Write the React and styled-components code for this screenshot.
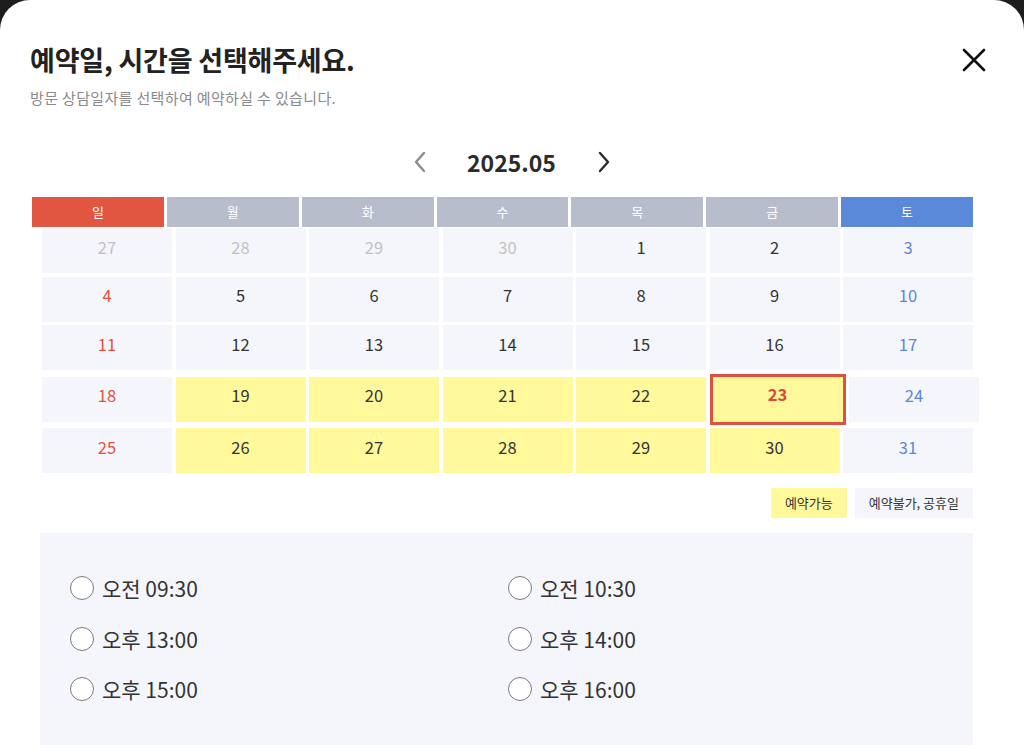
import React, { useState } from 'react';
import styled, { createGlobalStyle, css } from 'styled-components';

const GlobalStyle = createGlobalStyle`
  html, body {
    margin: 0;
    padding: 0;
    background: #1d1d1d;
  }
  body {
    font-family: 'Noto Sans CJK KR', 'Noto Sans', sans-serif;
    color: #333;
  }
`;

const Modal = styled.div`
  background: #fff;
  border-radius: 30px 30px 0 0;
  min-height: 755px;
  padding: 42px 38px 0 30px;
  box-sizing: border-box;
  overflow: hidden;
`;

const TitleRow = styled.div`
  display: flex;
  justify-content: space-between;
  align-items: center;
`;

const Title = styled.h2`
  margin: 0;
  font-size: 27px;
  line-height: 35px;
  font-weight: 700;
  color: #222;
  letter-spacing: -0.2px;
`;

const CloseButton = styled.button`
  border: 0;
  background: none;
  padding: 0;
  width: 24px;
  height: 24px;
  display: flex;
  align-items: center;
  justify-content: center;
  cursor: pointer;
`;

const Subtitle = styled.p`
  margin: 11px 0 0;
  font-size: 15px;
  line-height: 20px;
  color: #8a8a8a;
  letter-spacing: 0.35px;
`;

const MonthNav = styled.div`
  margin: 39px 0 0 10px;
  height: 30px;
  display: flex;
  align-items: center;
  justify-content: center;
  gap: 23px;
  width: 943px;
`;

const NavButton = styled.button`
  border: 0;
  background: none;
  padding: 0;
  width: 20px;
  height: 24px;
  display: flex;
  align-items: center;
  justify-content: center;
  cursor: pointer;
`;

const MonthLabel = styled.span`
  font-size: 23px;
  font-weight: 700;
  color: #2b2b2b;
  width: 116px;
  text-align: center;
`;

const WeekHeader = styled.div`
  margin: 20px 0 0 2px;
  width: 941px;
  display: grid;
  grid-template-columns: repeat(7, 1fr);
  gap: 3px;
`;

const headColors = ['#e05641', '#b8bdcc', '#b8bdcc', '#b8bdcc', '#b8bdcc', '#b8bdcc', '#5b89d9'];

const HeadCell = styled.div`
  height: 30px;
  line-height: 30px;
  text-align: center;
  font-size: 13px;
  color: #fff;
  background: ${({ $idx }) => headColors[$idx]};
`;

const Weeks = styled.div`
  margin: 1px 0 0 12px;
  display: flex;
  flex-direction: column;
  gap: 3.5px;
`;

const WeekRow = styled.div`
  display: flex;
  align-items: center;
  gap: 3.5px;
`;

const dayColor = ({ $type, $idx }) => {
  if ($type === 'prev') return '#c2c2c2';
  if ($type === 'selected') return '#e2483a';
  if ($idx === 0) return '#e2503d';
  if ($idx === 6) return '#5a87d6';
  return '#333';
};

const DayCell = styled.div`
  width: 130px;
  height: 45px;
  box-sizing: border-box;
  padding-bottom: 8px;
  display: flex;
  align-items: center;
  justify-content: center;
  font-size: 16.5px;
  color: ${dayColor};
  background: ${({ $type }) => ($type === 'avail' || $type === 'selected' ? '#fff99b' : '#f5f6fb')};
  ${({ $type }) =>
    $type === 'selected' &&
    css`
      box-sizing: content-box;
      height: 45px;
      padding-bottom: 0;
      border: 3px solid #e0503e;
      font-weight: 700;
      align-items: flex-start;
    `}
`;

const SelectedNum = styled.span`
  margin-top: 5px;
`;

const Legend = styled.div`
  margin: 15px 0 0;
  width: 943px;
  display: flex;
  justify-content: flex-end;
  gap: 8px;
`;

const LegendItem = styled.div`
  height: 30px;
  line-height: 30px;
  padding: 0 14px;
  font-size: 13px;
  color: #333;
  background: ${({ $avail }) => ($avail ? '#fff99b' : '#f5f6fb')};
`;

const TimePanel = styled.div`
  margin: 15px 0 0 10px;
  width: 933px;
  height: 212px;
  box-sizing: border-box;
  background: #f5f6fb;
  padding: 40px 30px 0;
  display: grid;
  grid-template-columns: 438px 1fr;
  row-gap: 20.5px;
  align-content: start;
`;

const TimeOption = styled.label`
  display: flex;
  align-items: center;
  gap: 8px;
  height: 30px;
  font-size: 21px;
  color: #333;
  cursor: pointer;
`;

const RadioCircle = styled.span`
  width: 22px;
  height: 22px;
  border-radius: 50%;
  border: 1.5px solid #7a7a7a;
  background: #fff;
  display: inline-flex;
  align-items: center;
  justify-content: center;
  flex-shrink: 0;
  &::after {
    content: '';
    width: 11px;
    height: 11px;
    border-radius: 50%;
    background: ${({ $checked }) => ($checked ? '#333' : 'transparent')};
  }
`;

const HiddenRadio = styled.input`
  display: none;
`;

const weeks = [
  [[27, 'prev'], [28, 'prev'], [29, 'prev'], [30, 'prev'], [1, 'normal'], [2, 'normal'], [3, 'normal']],
  [[4, 'normal'], [5, 'normal'], [6, 'normal'], [7, 'normal'], [8, 'normal'], [9, 'normal'], [10, 'normal']],
  [[11, 'normal'], [12, 'normal'], [13, 'normal'], [14, 'normal'], [15, 'normal'], [16, 'normal'], [17, 'normal']],
  [[18, 'normal'], [19, 'avail'], [20, 'avail'], [21, 'avail'], [22, 'avail'], [23, 'selected'], [24, 'normal']],
  [[25, 'normal'], [26, 'avail'], [27, 'avail'], [28, 'avail'], [29, 'avail'], [30, 'avail'], [31, 'normal']],
];

const days = ['일', '월', '화', '수', '목', '금', '토'];

const times = ['오전 09:30', '오전 10:30', '오후 13:00', '오후 14:00', '오후 15:00', '오후 16:00'];

function Chevron({ dir, color }) {
  const points = dir === 'left' ? '13,3 5,12 13,21' : '7,3 15,12 7,21';
  return (
    <svg width="20" height="24" viewBox="0 0 20 24" fill="none">
      <polyline points={points} stroke={color} strokeWidth="2.4" strokeLinecap="round" strokeLinejoin="round" />
    </svg>
  );
}

export default function App() {
  const [time, setTime] = useState(null);

  return (
    <>
      <GlobalStyle />
      <Modal>
        <TitleRow>
          <Title>예약일, 시간을 선택해주세요.</Title>
          <CloseButton aria-label="닫기">
            <svg width="24" height="24" viewBox="0 0 24 24" fill="none">
              <path d="M2 2 L22 22 M22 2 L2 22" stroke="#111" strokeWidth="2.6" strokeLinecap="round" />
            </svg>
          </CloseButton>
        </TitleRow>
        <Subtitle>방문 상담일자를 선택하여 예약하실 수 있습니다.</Subtitle>

        <MonthNav>
          <NavButton aria-label="이전 달">
            <Chevron dir="left" color="#8c8c8c" />
          </NavButton>
          <MonthLabel>2025.05</MonthLabel>
          <NavButton aria-label="다음 달">
            <Chevron dir="right" color="#2b2b2b" />
          </NavButton>
        </MonthNav>

        <WeekHeader>
          {days.map((d, i) => (
            <HeadCell key={d} $idx={i}>{d}</HeadCell>
          ))}
        </WeekHeader>

        <Weeks>
          {weeks.map((week, w) => (
            <WeekRow key={w}>
              {week.map(([d, type], i) => (
                <DayCell key={i} $type={type} $idx={i}>
                  {type === 'selected' ? <SelectedNum>{d}</SelectedNum> : d}
                </DayCell>
              ))}
            </WeekRow>
          ))}
        </Weeks>

        <Legend>
          <LegendItem $avail>예약가능</LegendItem>
          <LegendItem>예약불가, 공휴일</LegendItem>
        </Legend>

        <TimePanel>
          {times.map((t) => (
            <TimeOption key={t}>
              <HiddenRadio type="radio" name="time" checked={time === t} onChange={() => setTime(t)} />
              <RadioCircle $checked={time === t} />
              {t}
            </TimeOption>
          ))}
        </TimePanel>
      </Modal>
    </>
  );
}
